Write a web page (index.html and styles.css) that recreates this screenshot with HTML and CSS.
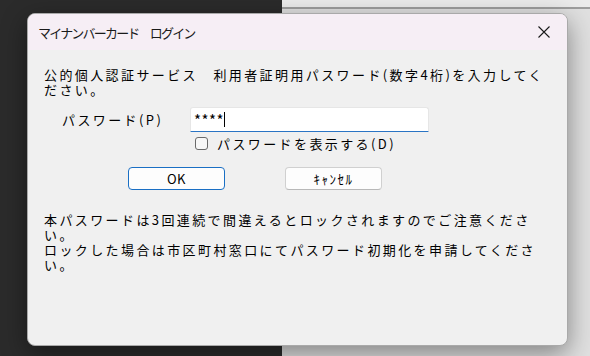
FILE: index.html
```html
<!DOCTYPE html>
<html lang="ja">
  <head>
    <meta charset="UTF-8" />
    <title>マイナンバーカード ログイン</title>
    <link rel="stylesheet" href="styles.css">
  </head>
  <body>
    <div class="desktop">
      <div class="pane-dark"></div>
      <div class="pane-light">
        <div class="pane-top"></div>
      </div>

      <div class="dialog">
        <div class="titlebar">
          <span class="title">マイナンバーカード　ログイン</span>
          <span class="close">
            <svg width="12" height="12" viewBox="0 0 12 12">
              <path d="M0.5 0.5 L11.5 11.5 M11.5 0.5 L0.5 11.5" stroke="#1a1a1a" stroke-width="1.1" fill="none" />
            </svg>
          </span>
        </div>

        <div class="content">
          <p class="intro">公的個人認証サービス　利用者証明用パスワード(数字4桁)を入力してく<br>ださい。</p>

          <div class="pw-row">
            <label for="pw" class="pw-label">パスワード(P)</label>
            <div class="pw-input"><span class="stars">****</span><span class="caret"></span></div>
          </div>

          <div class="show-row">
            <input type="checkbox" id="show" class="check" />
            <label for="show">パスワードを表示する(D)</label>
          </div>

          <div class="buttons">
            <button class="btn btn-ok">OK</button>
            <button class="btn btn-cancel">ｷｬﾝｾﾙ</button>
          </div>

          <p class="note">本パスワードは3回連続で間違えるとロックされますのでご注意くださ<br>い。<br>ロックした場合は市区町村窓口にてパスワード初期化を申請してくださ<br>い。</p>
        </div>
      </div>
    </div>
  </body>
</html>
```

FILE: styles.css
```css
body {
  margin: 0;
  font-family: "Noto Sans CJK JP", "Noto Sans", sans-serif;
  color: #000;
}

.desktop {
  position: relative;
  width: 590px;
  height: 356px;
  display: flex;
  overflow: hidden;
}

.pane-dark {
  width: 282px;
  background-color: #2b2b2b;
}

.pane-light {
  flex: 1;
  background-color: #e0e0e0;
}

.pane-top {
  height: 7px;
  background-color: #ebebeb;
  border-bottom: 2px solid #9e9e9e;
}

.dialog {
  position: absolute;
  left: 27px;
  top: 13px;
  width: 539px;
  height: 331px;
  background-color: #f0f0f0;
  border: 1px solid #a9a9a9;
  border-radius: 8px;
  overflow: hidden;
  box-shadow: 0 8px 26px rgba(0, 0, 0, 0.42);
}

.titlebar {
  height: 36px;
  background-color: #f6eef5;
  display: flex;
  align-items: center;
  justify-content: space-between;
}

.title {
  padding-left: 10px;
  font-size: 13px;
  letter-spacing: -1.8px;
  color: #1a1a1a;
}

.close {
  width: 46px;
  height: 36px;
  display: flex;
  align-items: center;
  justify-content: center;
}

.content {
  padding-left: 16px;
  font-size: 13px;
  letter-spacing: 2.4px;
  line-height: 15px;
}

.intro {
  margin: 17px 0 0;
}

.pw-row {
  margin-top: 10px;
  display: flex;
  align-items: center;
}

.pw-label {
  width: 128px;
  padding-left: 18px;
}

.pw-input {
  width: 234px;
  height: 23px;
  padding-left: 3px;
  background-color: #fff;
  border: 1px solid #e6e6e6;
  border-bottom: 1px solid #2a74c4;
  border-radius: 3px 3px 0 0;
  display: flex;
  align-items: center;
}

.stars {
  font-size: 15px;
  letter-spacing: 0.5px;
}

.caret {
  width: 1px;
  height: 15px;
  background-color: #000;
}

.show-row {
  margin-top: 4px;
  margin-left: 151px;
  display: flex;
  align-items: center;
  gap: 9px;
}

.check {
  appearance: none;
  margin: 0;
  width: 13px;
  height: 13px;
  border: 1px solid #6a6a6a;
  border-radius: 3px;
  background-color: #f7f7f7;
}

.buttons {
  margin-top: 16px;
  padding-left: 84px;
  display: flex;
  gap: 60px;
}

.btn {
  width: 97px;
  height: 23px;
  padding: 0;
  font-family: "Noto Sans CJK JP", sans-serif;
  font-size: 13px;
  letter-spacing: 0.5px;
  background-color: #fdfdfd;
  border: 1px solid #d0d0d0;
  border-bottom-color: #b8b8b8;
  border-radius: 4px;
  color: #000;
}

.btn-ok {
  border: 1px solid #1a6fc4;
}

.btn-cancel {
  letter-spacing: 1.5px;
}

.note {
  margin: 22px 0 0;
}
```
